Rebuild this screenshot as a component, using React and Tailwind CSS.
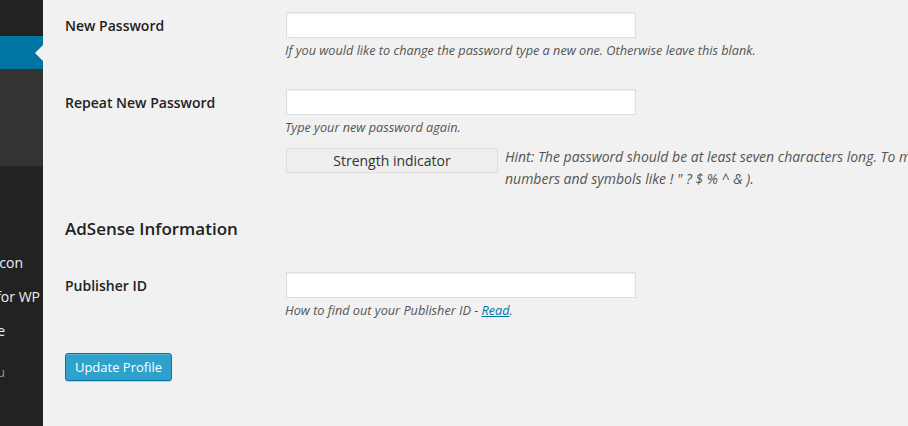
export default function App() {
  const font = { fontFamily: '"Open Sans", "Liberation Sans", sans-serif' };
  return (
    <div
      className="w-[908px] h-[426px] overflow-hidden flex bg-[#f1f1f1]"
      style={font}
    >
      {/* Sidebar */}
      <div className="w-[43px] shrink-0 h-full bg-[#222] flex flex-col overflow-hidden">
        <div className="h-[36px] shrink-0 bg-[#222]" />
        <div className="h-[33px] shrink-0 bg-[#0074a2] relative">
          <div className="absolute right-0 top-[9px] w-0 h-0 border-y-[8px] border-y-transparent border-r-[8px] border-r-[#f1f1f1]" />
        </div>
        <div className="h-[97px] shrink-0 bg-[#333]" />
        <div className="flex flex-col pt-[79px]">
          <div className="h-[34px] flex justify-end items-center pr-[20px] text-[14px] text-[#eee] whitespace-nowrap overflow-hidden">
            Site Favicon
          </div>
          <div className="h-[34px] flex justify-end items-center pr-[3px] text-[14px] text-[#eee] whitespace-nowrap overflow-hidden">
            AdSense for WP
          </div>
          <div className="h-[34px] flex justify-end items-center pr-[38px] text-[14px] text-[#eee] whitespace-nowrap overflow-hidden">
            Quick Save
          </div>
          <div className="h-[34px] mt-[9px] flex justify-end items-center pr-[38px] text-[13px] text-[#999] whitespace-nowrap overflow-hidden">
            Collapse menu
          </div>
        </div>
      </div>

      {/* Main */}
      <div className="flex-1 pl-[22px] pt-[12px] text-[14px] text-[#222]">
        {/* New Password */}
        <div className="flex">
          <div className="w-[221px] shrink-0 pt-[4px] leading-[20px] font-semibold">
            New Password
          </div>
          <div className="flex flex-col">
            <div className="w-[350px] h-[26px] bg-white border border-[#ddd] shadow-[inset_0_1px_2px_rgba(0,0,0,0.07)]" />
            <p className="mt-[2px] text-[12.7px] leading-[20px] italic text-[#555] -ml-[1px] whitespace-nowrap">
              If you would like to change the password type a new one. Otherwise leave this blank.
            </p>
          </div>
        </div>

        {/* Repeat New Password */}
        <div className="flex mt-[29px]">
          <div className="w-[221px] shrink-0 pt-[4px] leading-[20px] font-semibold">
            Repeat New Password
          </div>
          <div className="flex flex-col">
            <div className="w-[350px] h-[26px] bg-white border border-[#ddd] shadow-[inset_0_1px_2px_rgba(0,0,0,0.07)]" />
            <p className="mt-[2px] text-[12.7px] leading-[20px] italic text-[#555] -ml-[1px] whitespace-nowrap">
              Type your new password again.
            </p>
            <div className="flex mt-[11px] items-start">
              <div className="w-[212px] h-[25px] shrink-0 bg-[#eee] border border-[#ddd] flex items-center justify-center text-[14px] text-[#333]">
                Strength indicator
              </div>
              <p className="ml-[7px] -mt-[2px] text-[14px] leading-[22px] italic text-[#555] whitespace-nowrap">
                Hint: The password should be at least seven characters long. To make it stronger, use upper and lower case letters,
                <br />
                numbers and symbols like ! " ? $ % ^ &amp; ).
              </p>
            </div>
          </div>
        </div>

        {/* AdSense heading */}
        <h3 className="mt-[27px] text-[17px] leading-[24px] font-semibold text-[#222]">
          AdSense Information
        </h3>

        {/* Publisher ID */}
        <div className="flex mt-[31px]">
          <div className="w-[221px] shrink-0 pt-[4px] leading-[20px] font-semibold">
            Publisher ID
          </div>
          <div className="flex flex-col">
            <div className="w-[350px] h-[26px] bg-white border border-[#ddd] shadow-[inset_0_1px_2px_rgba(0,0,0,0.07)]" />
            <p className="mt-[2px] text-[12.7px] leading-[20px] italic text-[#555] -ml-[1px] whitespace-nowrap">
              How to find out your Publisher ID - <a className="text-[#0074a2] underline" href="#">Read</a>.
            </p>
          </div>
        </div>

        {/* Button */}
        <button className="mt-[33px] w-[107px] h-[28px] rounded-[3px] bg-[#2ea2cc] border border-[#0074a2] text-white text-[13px] leading-[26px] text-center shadow-[inset_0_1px_0_rgba(120,200,230,0.5),0_1px_0_rgba(0,0,0,0.15)]">
          Update Profile
        </button>
      </div>
    </div>
  );
}
